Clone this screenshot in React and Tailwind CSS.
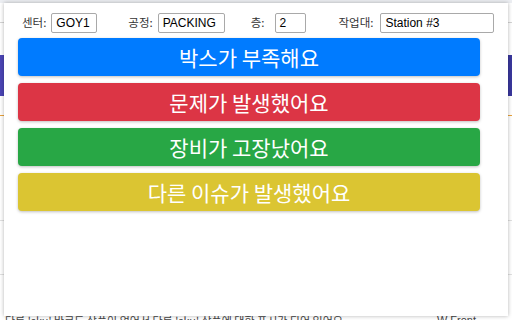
import React from "react";

const kr = { fontFamily: '"Noto Sans CJK KR", "Noto Sans", sans-serif' };
const lat = { fontFamily: '"Liberation Sans", Arial, sans-serif' };

function Field({ label, value, width, gap, className = "" }) {
  return (
    <div className={`flex items-center ${gap} ${className}`}>
      <span className="text-[11.5px] text-[#333] leading-none" style={kr}>
        {label}
      </span>
      <div
        className={`h-[20px] ${width} border border-[#a9a9a9] rounded-[2px] bg-white flex items-center px-[4px] text-[12px] text-black`}
        style={lat}
      >
        {value}
      </div>
    </div>
  );
}

function Btn({ color, children }) {
  return (
    <button
      className={`w-full h-[38px] ${color} rounded-[4px] text-white text-[21px] leading-none flex items-center justify-center shadow-[0_1px_3px_rgba(0,0,0,0.25)]`}
      style={kr}
    >
      {children}
    </button>
  );
}

export default function App() {
  return (
    <div className="relative w-[512px] h-[320px] overflow-hidden bg-white">
      {/* background page */}
      <div className="flex flex-col h-full">
        <div className="h-[3px] bg-[#eceef2]" />
        <div className="h-[20px] border-b border-[#d4d4d4]" />
        <div className="h-[32px]" />
        <div className="h-[41px] bg-gradient-to-r from-[#4b45b5] to-[#3a379c]" />
        <div className="h-[20px] border-b border-[#e9a23b]" />
        <div className="h-[105px] border-b border-[#e0e0e0]" />
        <div className="h-[54px] border-b border-[#e0e0e0]" />
        <div className="flex-1 flex items-end justify-between pl-[5px] pr-[36px] mb-[-5px]">
          <span className="text-[11px] text-[#444] whitespace-nowrap leading-[10px]" style={kr}>
            다른 'sku' 바코드 상품이 없어서 다른 'sku' 상품에 대한 표시가 되어 있어요
          </span>
          <span className="text-[11px] text-[#444] whitespace-nowrap leading-[10px]" style={lat}>
            W Front
          </span>
        </div>
      </div>

      {/* popup */}
      <div className="absolute left-[4px] top-[3px] w-[504px] h-[313px] bg-white shadow-[0_0_4px_rgba(0,0,0,0.3)]">
        <div className="flex items-center pl-[18px] pt-[10px] h-[30px]">
          <Field label="센터:" value="GOY1" width="w-[46px]" gap="gap-[5px]" />
          <Field label="공정:" value="PACKING" width="w-[67px]" gap="gap-[5px]" className="ml-[31px]" />
          <Field label="층:" value="2" width="w-[31px]" gap="gap-[10px]" className="ml-[26px]" />
          <Field label="작업대:" value="Station #3" width="w-[114px]" gap="gap-[7px]" className="ml-[33px]" />
        </div>
        <div className="flex flex-col gap-[7px] px-[14px] pt-[5px] w-[490px]">
          <Btn color="bg-[#007bff]">박스가 부족해요</Btn>
          <Btn color="bg-[#dc3545]">문제가 발생했어요</Btn>
          <Btn color="bg-[#28a745]">장비가 고장났어요</Btn>
          <Btn color="bg-[#dbc532]">다른 이슈가 발생했어요</Btn>
        </div>
      </div>
    </div>
  );
}
